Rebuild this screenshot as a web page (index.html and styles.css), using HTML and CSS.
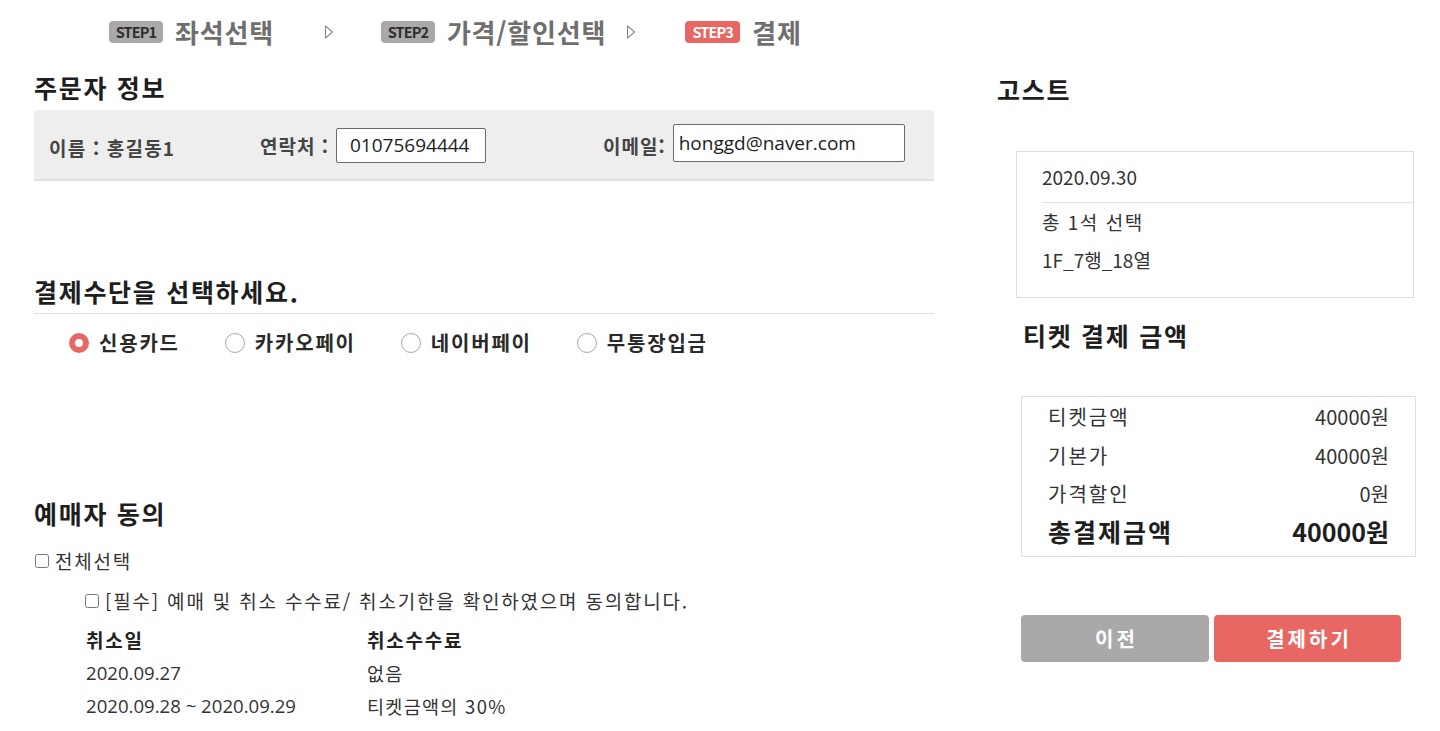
FILE: index.html
```html
<!DOCTYPE html>
<html lang="ko">
<head>
<meta charset="utf-8">
<title>결제</title>
<link rel="stylesheet" href="styles.css">
</head>
<body>
<div class="page">
  <nav class="steps">
    <div class="step step-1"><span class="badge">STEP1</span><span class="step-name">좌석선택</span></div>
    <svg class="arrow arrow-1" width="10" height="14" viewBox="0 0 10 14"><path d="M1.5 1 L8.5 7 L1.5 13 Z" fill="none" stroke="#8a8a8a" stroke-width="1.1" stroke-linejoin="round"/></svg>
    <div class="step step-2"><span class="badge">STEP2</span><span class="step-name">가격/할인선택</span></div>
    <svg class="arrow arrow-2" width="10" height="14" viewBox="0 0 10 14"><path d="M1.5 1 L8.5 7 L1.5 13 Z" fill="none" stroke="#8a8a8a" stroke-width="1.1" stroke-linejoin="round"/></svg>
    <div class="step step-3"><span class="badge badge-active">STEP3</span><span class="step-name">결제</span></div>
  </nav>

  <div class="main">
    <section class="left">
      <h2 class="title title-order">주문자 정보</h2>
      <div class="info-box">
        <div class="info-name">이름 : 홍길동1</div>
        <label class="info-field info-phone">연락처 : <input class="text-input phone-input" type="text" value="01075694444"></label>
        <label class="info-field info-email">이메일: <input class="text-input email-input" type="text" value="honggd@naver.com"></label>
      </div>

      <h2 class="title title-pay">결제수단을 선택하세요.</h2>
      <div class="pay-methods">
        <label class="pay-item"><input type="radio" name="pay" class="radio" checked><span>신용카드</span></label>
        <label class="pay-item"><input type="radio" name="pay" class="radio"><span>카카오페이</span></label>
        <label class="pay-item"><input type="radio" name="pay" class="radio"><span>네이버페이</span></label>
        <label class="pay-item"><input type="radio" name="pay" class="radio"><span>무통장입금</span></label>
      </div>

      <h2 class="title title-agree">예매자 동의</h2>
      <label class="check-row check-all"><input type="checkbox" class="checkbox"><span>전체선택</span></label>
      <div class="agree-detail">
        <label class="check-row check-must"><input type="checkbox" class="checkbox"><span>[필수] 예매 및 취소 수수료/ 취소기한을 확인하였으며 동의합니다.</span></label>
        <div class="fee-table">
          <div class="fee-head">취소일</div><div class="fee-head">취소수수료</div>
          <div class="fee-date">2020.09.27</div><div class="fee-text">없음</div>
          <div class="fee-date">2020.09.28 ~ 2020.09.29</div><div class="fee-text">티켓금액의 30%</div>
        </div>
      </div>
    </section>

    <aside class="right">
      <h2 class="title title-show">고스트</h2>
      <div class="show-box">
        <div class="show-date">2020.09.30</div>
        <div class="show-seats">
          <div class="seat-count">총 1석 선택</div>
          <div class="seat-pos">1F_7행_18열</div>
        </div>
      </div>

      <h2 class="title title-price">티켓 결제 금액</h2>
      <div class="price-box">
        <div class="price-row"><span class="price-label">티켓금액</span><span class="price-value">40000원</span></div>
        <div class="price-row"><span class="price-label">기본가</span><span class="price-value">40000원</span></div>
        <div class="price-row"><span class="price-label">가격할인</span><span class="price-value">0원</span></div>
        <div class="price-row price-total"><span class="price-label">총결제금액</span><span class="price-value">40000원</span></div>
      </div>

      <div class="buttons">
        <button class="btn btn-prev" type="button">이전</button>
        <button class="btn btn-pay" type="button">결제하기</button>
      </div>
    </aside>
  </div>
</div>
</body>
</html>
```

FILE: styles.css
```css
* { box-sizing: border-box; }
html, body { margin: 0; padding: 0; background: #fff; }
body {
  font-family: "Noto Sans CJK KR", "Noto Sans", sans-serif;
  color: #333;
  font-size: 18px;
}
.page { width: 1440px; height: 731px; overflow: hidden; }

/* steps */
.steps {
  display: flex;
  align-items: center;
  height: 70px;
  padding: 0 0 6px 109px;
}
.step { display: flex; align-items: center; }
.badge {
  display: inline-block;
  width: 54px;
  height: 22px;
  line-height: 22px;
  border-radius: 4px;
  background: #a9a9a9;
  color: #2e2e2e;
  font-size: 14.5px;
  font-weight: 700;
  text-align: center;
  letter-spacing: -0.9px;
}
.badge-active { background: #e96762; color: #fff; width: 55px; }
.step-name {
  margin-left: 12px;
  font-size: 26px;
  font-weight: 700;
  color: #6f6f6f;
  line-height: 30px;
  letter-spacing: 0.8px;
}
.arrow-1 { margin-left: 50px; margin-right: 47px; }
.arrow-2 { margin-left: 20px; margin-right: 49px; }

/* main */
.main { display: flex; }
.left { width: 934px; padding-left: 34px; }
.right { width: 506px; padding-left: 63px; }

.title {
  margin: 0;
  font-size: 25px;
  font-weight: 700;
  color: #1e1e1e;
  line-height: 34px;
  letter-spacing: 1.7px;
}
.title-order { margin-top: 0; }

.info-box {
  display: flex;
  align-items: center;
  height: 71px;
  margin-top: 6px;
  background: #eeeeee;
  border-top: 1px solid #f4f4f4;
  border-bottom: 2px solid #e2e2e2;
  padding: 0 0 0 15px;
  color: #444;
  font-weight: 700;
  font-size: 19px;
  letter-spacing: 1px;
}
.info-name { width: 211px; padding-top: 4px; letter-spacing: 1.2px; }
.info-field { display: flex; align-items: center; }
.info-phone { width: 343px; }
.text-input {
  font-family: "Open Sans", "Noto Sans CJK KR", sans-serif;
  font-size: 19px;
  letter-spacing: 0;
  color: #222;
  border: 1px solid #6b6b6b;
  border-radius: 2px;
  background: #fff;
  padding: 0 0 0 5px;
  margin-left: 7px;
  outline: none;
}
.phone-input { width: 150px; height: 35px; padding-left: 13px; }
.email-input { width: 232px; height: 38px; margin-left: 7px; margin-top: -4px; }

.title-pay { margin-top: 93px; }
.pay-methods {
  display: flex;
  align-items: center;
  border-top: 1px solid #dcdcdc;
  margin-top: 5px;
  padding: 16px 0 0 35px;
}
.pay-item {
  display: flex;
  align-items: center;
  margin-right: 45px;
  font-weight: 700;
  font-size: 20px;
  letter-spacing: 1.8px;
  color: #2a2a2a;
  line-height: 26px;
}
.radio {
  -webkit-appearance: none;
  appearance: none;
  width: 20px;
  height: 20px;
  margin: 0 10px 0 0;
  border-radius: 50%;
  border: 1px solid #a8a8a8;
  background: #fff;
}
.radio:checked {
  border: 6px solid #e96762;
  background: #fff;
}

.title-agree { margin-top: 140px; }
.check-row {
  display: flex;
  align-items: center;
  font-size: 19px;
  letter-spacing: 1.8px;
  color: #333;
  line-height: 26px;
}
.checkbox {
  width: 14px;
  height: 14px;
  margin: 0 6px 0 1px;
}
.check-all { margin-top: 18px; }
.agree-detail { padding-left: 50px; }
.check-must { margin-top: 14px; }
.fee-table {
  display: grid;
  grid-template-columns: 281px auto;
  row-gap: 7px;
  margin-top: 13px;
  padding-left: 2px;
  font-size: 18.5px;
  line-height: 26px;
  color: #333;
}
.fee-head { font-weight: 700; color: #222; font-size: 19px; letter-spacing: 1.8px; }
.fee-date { font-family: "Open Sans", "Noto Sans CJK KR", sans-serif; font-size: 18.6px; }
.fee-text { letter-spacing: 1.3px; }

/* right column */
.title-show { margin-top: 2px; }
.show-box {
  width: 398px;
  margin: 45px 0 0 19px;
  border: 1px solid #dedede;
  padding-left: 25px;
  height: 147px;
}
.show-date {
  border-bottom: 1px solid #e2e2e2;
  line-height: 26px;
  padding: 12px 0 12px 0;
  font-size: 19px;
}
.show-seats {
  font-size: 19px;
  line-height: 26px;
  padding-top: 6px;
}
.seat-count { letter-spacing: 1.5px; }
.show-seats div + div { margin-top: 12px; }

.title-price { margin: 20px 0 0 26px; }
.price-box {
  width: 395px;
  margin: 44px 0 0 24px;
  border: 1px solid #dedede;
  padding: 7px 26px 0 26px;
  height: 161px;
}
.price-row {
  display: flex;
  justify-content: space-between;
  align-items: baseline;
  font-size: 20px;
  line-height: 26px;
  color: #333;
  margin-bottom: 12.5px;
}
.price-label { letter-spacing: 2px; }
.price-value { letter-spacing: 0; }
.price-total {
  font-size: 25px;
  font-weight: 700;
  color: #1e1e1e;
  line-height: 30px;
  margin-bottom: 0;
  margin-top: -4px;
}

.buttons {
  display: flex;
  gap: 5px;
  margin: 58px 0 0 24px;
}
.btn {
  width: 188px;
  height: 47px;
  border: none;
  border-radius: 4px;
  color: #fff;
  font-family: "Noto Sans CJK KR", "Noto Sans", sans-serif;
  font-size: 20px;
  font-weight: 700;
  letter-spacing: 3px;
  padding: 0 0 0 3px;
}
.btn-prev { background: #a9a9a9; }
.btn-pay { background: #e96762; width: 187px; }
```
